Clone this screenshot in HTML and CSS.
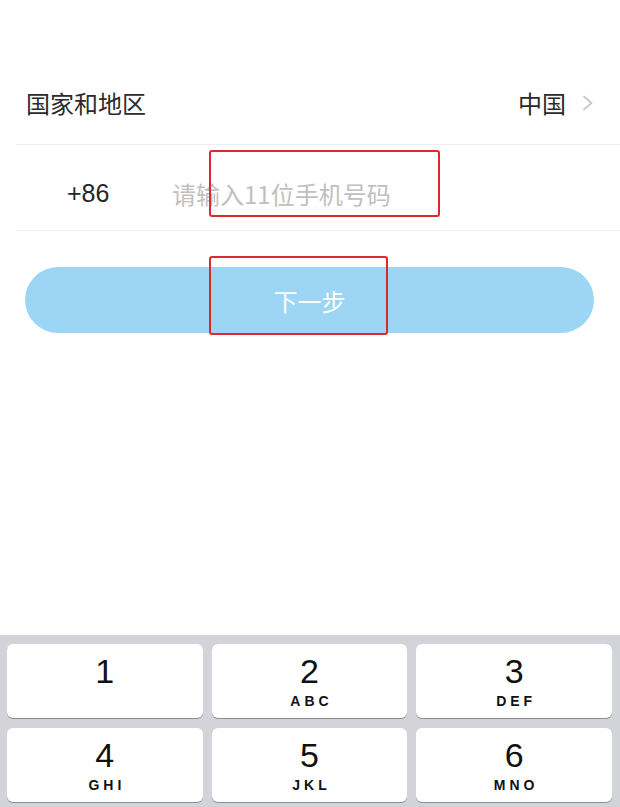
FILE: index.html
```html
<!DOCTYPE html>
<html lang="zh-CN">
<head>
<meta charset="utf-8">
<title>手机号登录</title>
<link rel="stylesheet" href="styles.css">
</head>
<body>
<div class="page">
  <div class="form">
    <div class="row row-country">
      <span class="label">国家和地区</span>
      <span class="value">中国
        <svg class="chev" width="12" height="16" viewBox="0 0 12 16"><path d="M2 1.5 L9.5 8 L2 14.5" fill="none" stroke="#c8c8cb" stroke-width="1.8" stroke-linecap="round" stroke-linejoin="round"/></svg>
      </span>
    </div>
    <div class="row row-phone">
      <span class="code">+86</span>
      <span class="placeholder">请输入11位手机号码</span>
    </div>
    <div class="next-btn">下一步</div>
  </div>

  <div class="keyboard">
    <div class="key"><span class="digit">1</span></div>
    <div class="key"><span class="digit">2</span><span class="letters">ABC</span></div>
    <div class="key"><span class="digit">3</span><span class="letters">DEF</span></div>
    <div class="key"><span class="digit">4</span><span class="letters">GHI</span></div>
    <div class="key"><span class="digit">5</span><span class="letters">JKL</span></div>
    <div class="key"><span class="digit">6</span><span class="letters">MNO</span></div>
  </div>

  <div class="mark mark-input"></div>
  <div class="mark mark-btn"></div>
</div>
</body>
</html>
```
FILE: styles.css
```css
html, body {
  margin: 0;
  padding: 0;
  background: #ffffff;
}
body {
  font-family: "Noto Sans CJK SC", "Noto Sans", sans-serif;
}
.page {
  position: relative;
  width: 620px;
  height: 807px;
  overflow: hidden;
  display: flex;
  flex-direction: column;
}
.form {
  padding-top: 62px;
}
.row {
  display: flex;
  align-items: center;
  margin-left: 16px;
  border-bottom: 1px solid #eeeeee;
  box-sizing: border-box;
}
.row-country {
  height: 83px;
  padding-left: 10px;
  padding-right: 26px;
  justify-content: space-between;
}
.label, .value {
  font-size: 24px;
  line-height: 1;
  color: #2b2b2b;
}
.value {
  display: flex;
  align-items: center;
  gap: 16px;
}
.chev {
  display: block;
}
.row-phone {
  height: 86px;
  padding-left: 51px;
  padding-top: 12px;
}
.code {
  font-family: "Liberation Sans", Arial, sans-serif;
  font-size: 25px;
  line-height: 1;
  color: #262626;
  width: 105px;
}
.placeholder {
  font-size: 24px;
  line-height: 1;
  color: #c0c0c0;
}
.next-btn {
  margin: 36px 26px 0 25px;
  height: 66px;
  border-radius: 33px;
  background: #9dd5f5;
  color: #ffffff;
  font-size: 24px;
  display: flex;
  align-items: center;
  justify-content: center;
}
.keyboard {
  margin-top: auto;
  height: 172px;
  box-sizing: border-box;
  padding: 9px 8px 0 7px;
  background: #d2d4da;
  display: grid;
  grid-template-columns: repeat(3, 1fr);
  grid-auto-rows: 74px;
  column-gap: 9px;
  row-gap: 10px;
}
.key {
  background: #ffffff;
  border-radius: 6px;
  box-shadow: 0 1px 0 #8c8d91;
  display: flex;
  flex-direction: column;
  align-items: center;
  padding-top: 10px;
  box-sizing: border-box;
}
.digit {
  font-family: "Liberation Sans", Arial, sans-serif;
  font-size: 34px;
  line-height: 34px;
  color: #111111;
}
.letters {
  font-family: "Liberation Sans", Arial, sans-serif;
  font-weight: bold;
  font-size: 14px;
  line-height: 14px;
  letter-spacing: 4px;
  margin-top: 6px;
  margin-right: -4px;
  color: #111111;
}
.mark {
  position: absolute;
  border: 2.5px solid #db2a2c;
  border-radius: 3px;
  box-sizing: border-box;
}
.mark-input {
  left: 209px;
  top: 150px;
  width: 231px;
  height: 67px;
}
.mark-btn {
  left: 209px;
  top: 256px;
  width: 179px;
  height: 79px;
}
```
